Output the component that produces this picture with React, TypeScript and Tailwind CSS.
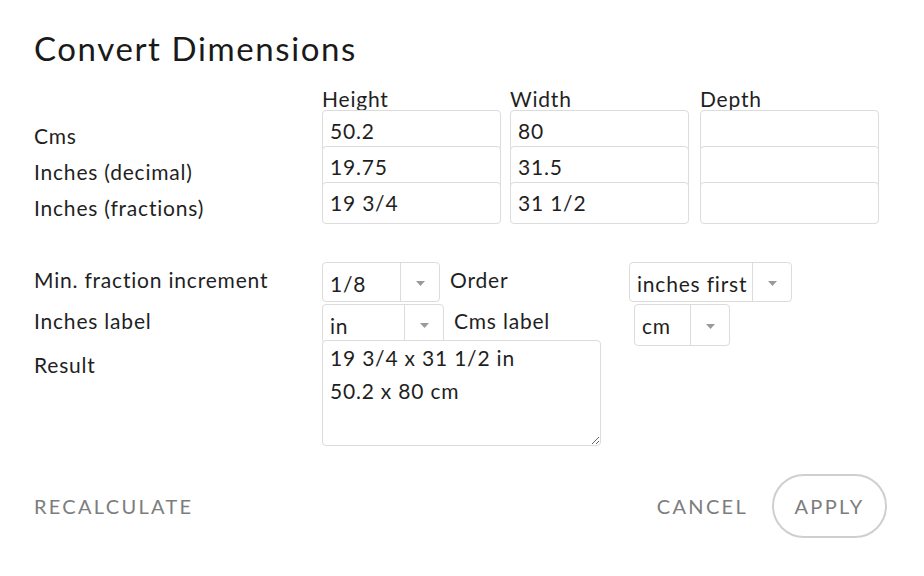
import React from "react"

const font = { fontFamily: "Lato, 'Liberation Sans', sans-serif" }

const Arrow = () => (
  <svg width="9" height="5" viewBox="0 0 9 5" className="text-[#9a9a9a]">
    <path d="M0 0 L9 0 L4.5 5 Z" fill="currentColor" />
  </svg>
)

const Select = ({ value, textW, h = "h-[40px]" }: { value: string; textW: string; h?: string }) => (
  <div className={`flex ${h} shrink-0 border border-[#dcdcdc] rounded-[4px] bg-white`}>
    <div className={`${textW} pl-[7px] pt-[9px] leading-[24px] whitespace-nowrap`}>{value}</div>
    <div className="w-[39px] border-l border-[#dcdcdc] flex items-center justify-center pt-[2px]">
      <Arrow />
    </div>
  </div>
)

const Box = ({ value }: { value: string }) => (
  <div className="w-[179px] h-[42px] shrink-0 border border-[#dcdcdc] rounded-[4px] bg-white pl-[7px] flex items-center">
    {value}
  </div>
)

const rows = [
  { label: "Cms", h: "50.2", w: "80" },
  { label: "Inches (decimal)", h: "19.75", w: "31.5" },
  { label: "Inches (fractions)", h: "19 3/4", w: "31 1/2" },
]

export default function App() {
  return (
    <div
      className="w-[924px] h-[576px] bg-white text-[#1f1f1f] px-[34px] pt-[26px] text-[21px] tracking-[0.8px]"
      style={font}
    >
      <h1 className="text-[33px] leading-[44px] tracking-[1.6px] text-[#1a1a1a]">Convert Dimensions</h1>

      <div className="flex mt-[18px] leading-[22px]">
        <div className="w-[288px]" />
        <div className="w-[188px]">Height</div>
        <div className="w-[190px]">Width</div>
        <div>Depth</div>
      </div>

      <div className="flex flex-col">
        {rows.map((r, i) => (
          <div key={r.label} className={`flex items-start ${i === 2 ? "h-[42px]" : "h-[36px]"}`}>
            <div className="w-[288px] shrink-0 pt-[14px] leading-[24px]">{r.label}</div>
            <Box value={r.h} />
            <div className="w-[9px] shrink-0" />
            <Box value={r.w} />
            <div className="w-[11px] shrink-0" />
            <Box value="" />
          </div>
        ))}
      </div>

      <div className="flex flex-col mt-[38px]">
        <div className="flex items-start h-[42px]">
          <div className="w-[288px] shrink-0 pt-[6px] leading-[24px]">Min. fraction increment</div>
          <Select value="1/8" textW="w-[77px]" />
          <div className="w-[189px] shrink-0 pl-[10px] pt-[6px] leading-[24px]">Order</div>
          <Select value="inches first" textW="w-[122px]" />
        </div>
        <div className="flex items-start h-[36px]">
          <div className="w-[288px] shrink-0 pt-[5px] leading-[24px]">Inches label</div>
          <Select value="in" textW="w-[81px]" h="h-[40px]" />
          <div className="w-[190px] shrink-0 pl-[10px] pt-[5px] leading-[24px]">Cms label</div>
          <Select value="cm" textW="w-[55px]" h="h-[42px]" />
        </div>
        <div className="flex items-start">
          <div className="w-[288px] shrink-0 pt-[13px] leading-[24px]">Result</div>
          <textarea
            className="relative w-[279px] h-[106px] border border-[#dcdcdc] rounded-[4px] bg-white pl-[7px] pt-[0px] leading-[33px] text-[21px] tracking-[0.8px] text-[#1f1f1f] outline-none"
            style={font}
            defaultValue={"19 3/4 x 31 1/2 in\n50.2 x 80 cm"}
          />
        </div>
      </div>

      <div className="flex items-center mt-[28px]">
        <button className="text-[20px] tracking-[2.3px] text-[#7d7d7d]">RECALCULATE</button>
        <div className="flex-1" />
        <button className="text-[20px] tracking-[2.3px] text-[#7d7d7d] mr-[24px]">CANCEL</button>
        <button className="w-[115px] h-[64px] rounded-full border-2 border-[#cfcfcf] text-[20px] tracking-[2.3px] text-[#7d7d7d] mr-[3px]">
          APPLY
        </button>
      </div>
    </div>
  )
}
